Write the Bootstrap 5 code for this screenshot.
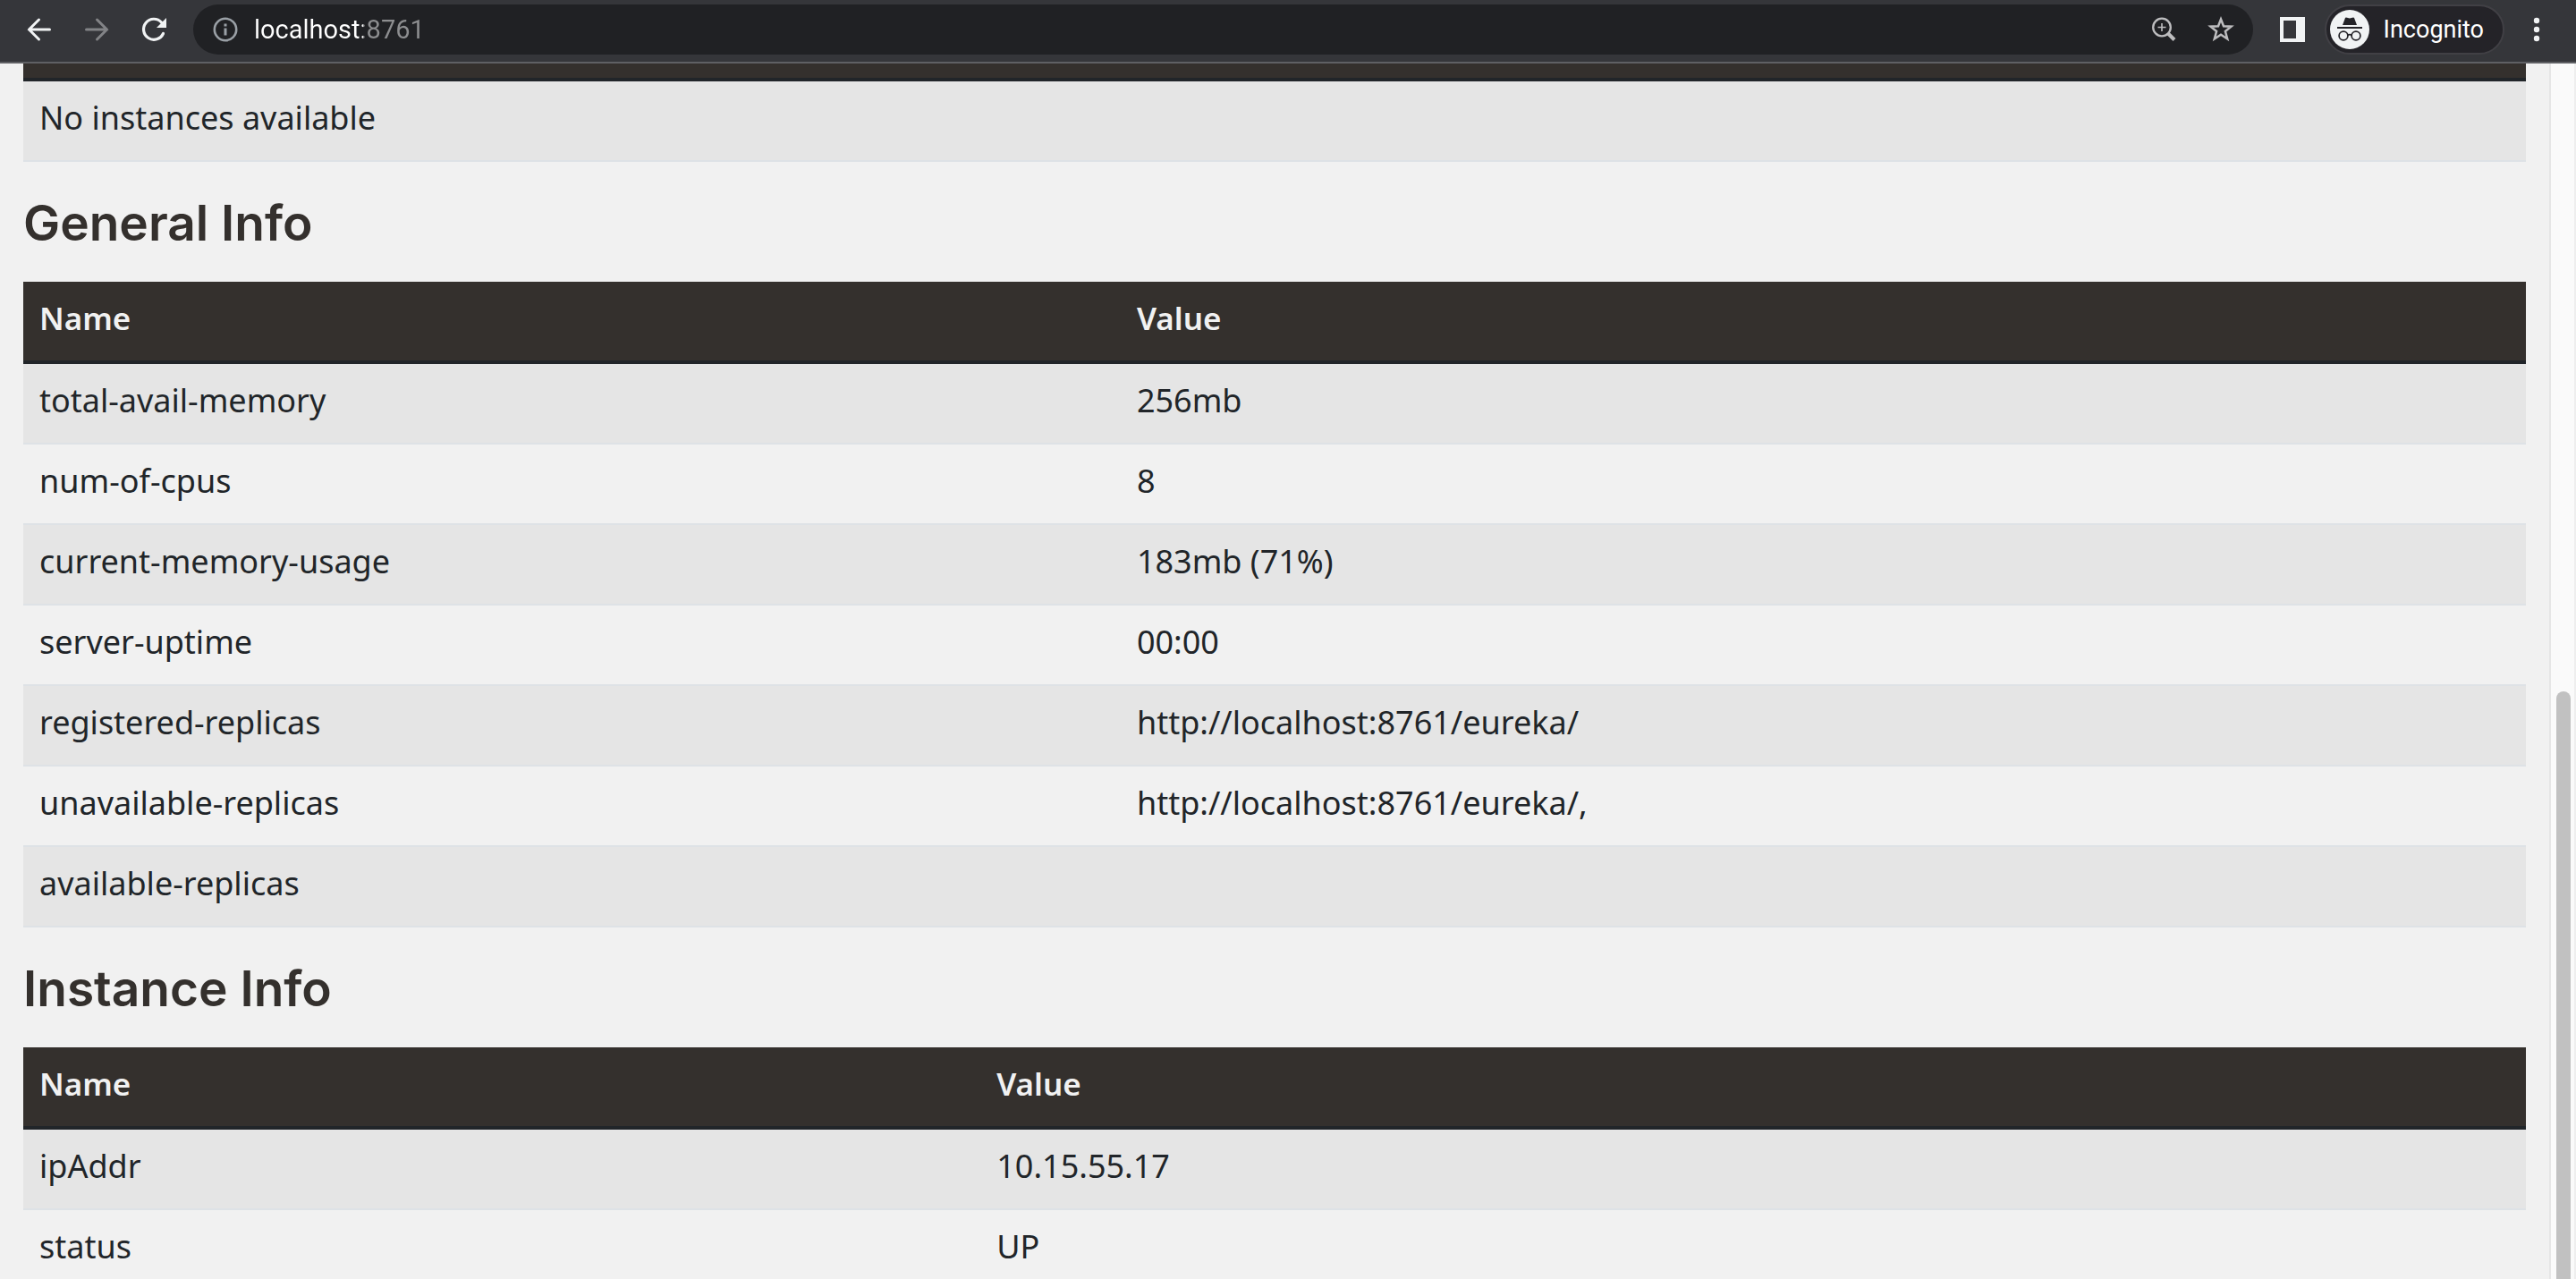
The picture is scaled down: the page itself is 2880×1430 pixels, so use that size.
<!DOCTYPE html>
<html lang="en">
<head>
<meta charset="utf-8">
<meta name="viewport" content="width=device-width, initial-scale=1">
<title>Eureka</title>
<link href="https://cdn.jsdelivr.net/npm/bootstrap@5.3.0/dist/css/bootstrap.min.css" rel="stylesheet">
<style>
body { background: #f1f1f1; color: #212529; font-family: "Noto Sans", sans-serif; font-size: 36px; line-height: 54px; }
.toolbar { height: 71px; padding: 5px 28px 8px; background: #35363a; border-bottom: 2px solid #5f6064; font-family: Roboto, sans-serif; font-size: 29px; line-height: 36px; color: #fff; }
.tool-btn { width: 32px; height: 32px; padding: 0; border: 0; background: none; color: #f1f3f4; display: flex; flex-shrink: 0; }
.tool-btn:disabled { color: #828386; }
.tool-btn svg { width: 32px; height: 32px; }
.nav-tools { gap: 32px; padding-right: 28px; }
.omnibox { height: 56px; padding: 0 20px; border-radius: 28px; background: #202124; }
.omnibox .tool-btn { color: #9aa0a6; }
.omnibox .page-tool { color: #bdbdbf; }
.page-tools { gap: 32px; }
.url-field { border: 0; outline: 0; padding: 0; margin: 0 8px 0 16px; min-width: 0; color: transparent; background: linear-gradient(90deg, #fff 122px, #8d8e90 122px); -webkit-background-clip: text; background-clip: text; }
.side-btn { margin: 0 20px 0 28px; }
.profile { height: 56px; margin-right: 20px; padding: 0 21px 0 4px; gap: 16px; border: 2px solid #414045; border-radius: 28px; background: #242328; color: #fff; font-size: 27px; }
.profile svg { width: 44px; height: 44px; }
.content-pane { min-height: 0; overflow: hidden; }
.page-body { padding: 0 26px; }
.page-body h1 { margin: 38px 0 36px; color: #34302d; font-family: Inter, sans-serif; font-size: 55px; font-weight: 600; line-height: 60px; }
.info { --bs-table-color: #212529; --bs-table-striped-color: #212529; --bs-table-bg: #f1f1f1; --bs-table-striped-bg: #e5e5e5; margin: 0; table-layout: fixed; border-collapse: separate; border-spacing: 0; }
.info th, .info td { padding: 14px 18px 20px; height: 90px; border-bottom: 2px solid #dee2e6; }
.info thead th { height: 92px; background: #34302d; color: #f1f1f1; font-size: 35px; font-weight: 600; border-bottom: 4px solid #212529; }
.info .head-edge th { height: 20px; padding: 0; }
.general-name { width: 43.85%; }
.instance-name { width: 38.25%; }
.scroll-track { width: 30px; padding: 702px 4px 0 6px; background: #fafafa; border-left: 2px solid #e6e6e6; border-right: 2px solid #eee; }
.scroll-thumb { border-radius: 8px 8px 0 0; background: #c1c1c1; }
</style>
<script src="https://cdn.jsdelivr.net/npm/bootstrap@5.3.0/dist/js/bootstrap.bundle.min.js"></script>
</head>
<body class="vh-100 overflow-hidden d-flex flex-column">
<header class="toolbar d-flex align-items-center flex-shrink-0">
  <nav class="nav-tools d-flex" aria-label="Navigation">
    <button class="tool-btn" type="button" aria-label="Back"><svg viewBox="0 0 32 32" fill="none" stroke="currentColor" stroke-width="3" stroke-linecap="round"><path d="M4.500 16H27.500M15.500 5L4.500 16L15.500 27"/></svg></button>
    <button class="tool-btn" type="button" aria-label="Forward" disabled><svg viewBox="0 0 32 32" fill="none" stroke="currentColor" stroke-width="3" stroke-linecap="round"><path d="M4.500 16H27.500M16.500 5L27.500 16L16.500 27"/></svg></button>
    <button class="tool-btn" type="button" aria-label="Reload"><svg viewBox="0 0 32 32" fill="none"><path d="M26.500 20.500A11.500 11.500 0 1 1 24.500 8" stroke="currentColor" stroke-width="3.200" stroke-linecap="round"/><path d="M30 3V14H19Z" fill="currentColor"/></svg></button>
  </nav>
  <div class="omnibox d-flex align-items-center flex-grow-1">
    <button class="tool-btn" type="button" aria-label="Site information"><svg viewBox="0 0 32 32" fill="none"><circle cx="16" cy="16" r="12.200" stroke="currentColor" stroke-width="2.600"/><path d="M16 14.500V22.500M16 9.500V12.500" stroke="currentColor" stroke-width="3"/></svg></button>
    <input class="url-field flex-grow-1" type="text" aria-label="Address" value="localhost:8761">
    <div class="page-tools d-flex">
      <button class="tool-btn page-tool" type="button" aria-label="Zoom"><svg viewBox="0 0 32 32" fill="none" stroke="currentColor"><circle cx="14" cy="13.500" r="9.800" stroke-width="2.300"/><path d="M21 20.500L28 27.500" stroke-width="4"/><path d="M14 9V18M9.500 13.500H18.500" stroke-width="1.600"/></svg></button>
      <button class="tool-btn page-tool" type="button" aria-label="Bookmark this page"><svg viewBox="0 0 32 32" fill="none" stroke="currentColor" stroke-width="2.500"><path d="M16 4.500L19 12.300L27.500 12.700L20.900 18L23.200 26.500L16 21.800L8.800 26.500L11.100 18L4.500 12.700L13 12.300Z"/></svg></button>
    </div>
  </div>
  <button class="tool-btn side-btn" type="button" aria-label="Side panel"><svg viewBox="0 0 32 32"><path fill="currentColor" fill-rule="evenodd" d="M2 2H30V30H2ZM6 6V26H20V6Z"/></svg></button>
  <button class="profile d-flex align-items-center" type="button"><svg viewBox="0 0 44 44"><circle cx="22" cy="22" r="22" fill="#f1f3f4"/><path fill="#242328" d="M14 17L17 9Q17.500 8 19 8.700L22 9.500L25 8.700Q26.500 8 27 9L30 17ZM8 19H36V21H8Z"/><g fill="none" stroke="#242328" stroke-width="1.700"><circle cx="15" cy="29" r="4.900"/><circle cx="29" cy="29" r="4.900"/><path d="M19.500 28.500Q22 26.700 24.500 28.500"/></g></svg><span>Incognito</span></button>
  <button class="tool-btn menu-btn" type="button" aria-label="Menu"><svg viewBox="0 0 32 32" fill="currentColor"><circle cx="16" cy="6" r="3.200"/><circle cx="16" cy="16" r="3.200"/><circle cx="16" cy="26" r="3.200"/></svg></button>
</header>
<div class="content-pane d-flex flex-grow-1">
  <main class="page-body flex-grow-1">
    <table class="table table-striped info">
      <thead><tr class="head-edge"><th aria-label="Instances"></th></tr></thead>
      <tbody><tr><td>No instances available</td></tr></tbody>
    </table>
    <h1>General Info</h1>
    <table class="table table-striped info">
      <thead><tr><th class="general-name">Name</th><th>Value</th></tr></thead>
      <tbody>
        <tr><td>total-avail-memory</td><td>256mb</td></tr>
        <tr><td>num-of-cpus</td><td>8</td></tr>
        <tr><td>current-memory-usage</td><td>183mb (71%)</td></tr>
        <tr><td>server-uptime</td><td>00:00</td></tr>
        <tr><td>registered-replicas</td><td>http://localhost:8761/eureka/</td></tr>
        <tr><td>unavailable-replicas</td><td>http://localhost:8761/eureka/,</td></tr>
        <tr><td>available-replicas</td><td></td></tr>
      </tbody>
    </table>
    <h1>Instance Info</h1>
    <table class="table table-striped info">
      <thead><tr><th class="instance-name">Name</th><th>Value</th></tr></thead>
      <tbody>
        <tr><td>ipAddr</td><td>10.15.55.17</td></tr>
        <tr><td>status</td><td>UP</td></tr>
      </tbody>
    </table>
  </main>
  <div class="scroll-track d-flex flex-column flex-shrink-0"><div class="scroll-thumb flex-grow-1"></div></div>
</div>
</body>
</html>
